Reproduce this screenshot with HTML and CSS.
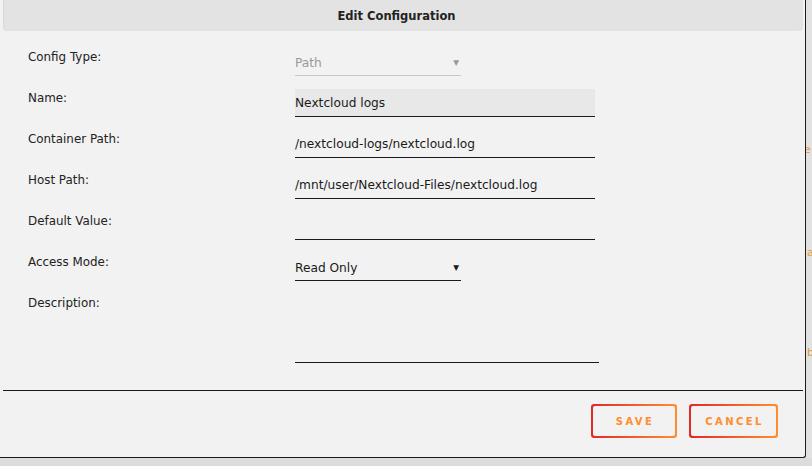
FILE: index.html
```html
<!DOCTYPE html>
<html>
<head>
<meta charset="utf-8">
<link rel="stylesheet" href="styles.css">
</head>
<body>
<div class="page">
  <div class="dialog">
    <div class="titlebar">Edit Configuration</div>
    <div class="form">
      <div class="label">Config Type:</div>
      <div class="field select disabled"><span>Path</span><span class="arrow">▼</span></div>
      <div class="label">Name:</div>
      <div class="field input filled"><span>Nextcloud logs</span></div>
      <div class="label">Container Path:</div>
      <div class="field input"><span>/nextcloud-logs/nextcloud.log</span></div>
      <div class="label">Host Path:</div>
      <div class="field input"><span>/mnt/user/Nextcloud-Files/nextcloud.log</span></div>
      <div class="label">Default Value:</div>
      <div class="field input"><span></span></div>
      <div class="label">Access Mode:</div>
      <div class="field select"><span>Read Only</span><span class="arrow">▼</span></div>
      <div class="label">Description:</div>
      <div class="field textarea"></div>
    </div>
    <div class="separator"></div>
    <div class="actions">
      <button class="btn"><span>SAVE</span></button>
      <button class="btn"><span>CANCEL</span></button>
    </div>
  </div>
  <div class="behind">
    <span class="frag f1">e</span>
    <span class="frag f2">a</span>
    <span class="frag f3">b</span>
  </div>
</div>
</body>
</html>
```
FILE: styles.css
```css
html, body {
  margin: 0;
  padding: 0;
  background: #dcdcdc;
  font-family: "DejaVu Sans", "Liberation Sans", sans-serif;
}
.page {
  position: relative;
  width: 812px;
  height: 466px;
  overflow: hidden;
  display: flex;
  align-items: flex-start;
}
.dialog {
  width: 806px;
  height: 458px;
  background: #f2f2f2;
  border-right: 1px solid #1c1c1c;
  border-bottom: 1px solid #1c1c1c;
  border-bottom-right-radius: 3px;
  box-sizing: border-box;
  padding: 0 2px 0 3px;
  display: flex;
  flex-direction: column;
}
.titlebar {
  height: 31px;
  background: #e3e3e3;
  border-radius: 0 0 4px 4px;
  border-left: 1px solid #d8d8d8;
  display: flex;
  align-items: center;
  justify-content: center;
  font-weight: bold;
  font-size: 11.5px;
  color: #222;
  padding-right: 14px;
}
.form {
  display: grid;
  grid-template-columns: 267px 1fr;
  row-gap: 13px;
  padding: 17px 0 0 25px;
  align-items: start;
}
.label {
  font-size: 11.9px;
  line-height: 14px;
  color: #222;
  padding-top: 2px;
}
.field {
  height: 28px;
  box-sizing: border-box;
  display: flex;
  align-items: center;
  font-size: 12.2px;
  color: #1a1a1a;
  border-bottom: 1px solid #1a1a1a;
}
.input {
  width: 300px;
}
.filled {
  background: #e8e8e8;
}
.select {
  width: 166px;
  justify-content: space-between;
  padding-top: 2px;
}
.select .arrow {
  font-size: 7.5px;
  margin-right: 2px;
}
.disabled {
  color: #999;
  border-bottom-color: #c8c8c8;
}
.textarea {
  width: 304px;
  height: 69px;
}
.separator {
  margin-top: 27px;
  height: 1px;
  background: #1c1c1c;
}
.actions {
  display: flex;
  justify-content: flex-end;
  gap: 12px;
  padding: 13px 25px 0 0;
}
.btn {
  height: 34px;
  padding: 2px;
  border: none;
  border-radius: 3px;
  background: linear-gradient(90deg, #e22828, #ff8d2f);
  display: flex;
  cursor: pointer;
}
.btn span {
  display: flex;
  align-items: center;
  justify-content: center;
  background: #f2f2f2;
  border-radius: 2px;
  color: #ff8d2f;
  font-family: "DejaVu Sans", sans-serif;
  font-weight: bold;
  font-size: 10px;
  letter-spacing: 2.4px;
  padding: 0 0 0 2px;
  box-sizing: border-box;
}
.btn:first-child span { width: 82px; }
.btn:last-child span { width: 85px; }
.behind {
  position: relative;
  flex: 1;
  height: 458px;
  background: #e2e2e2;
  overflow: hidden;
}
.frag {
  position: absolute;
  left: 1px;
  font-size: 11px;
  color: #e09a40;
}
.f1 { top: 143px; left: -2px; }
.f2 { top: 246px; }
.f3 { top: 346px; }
```
